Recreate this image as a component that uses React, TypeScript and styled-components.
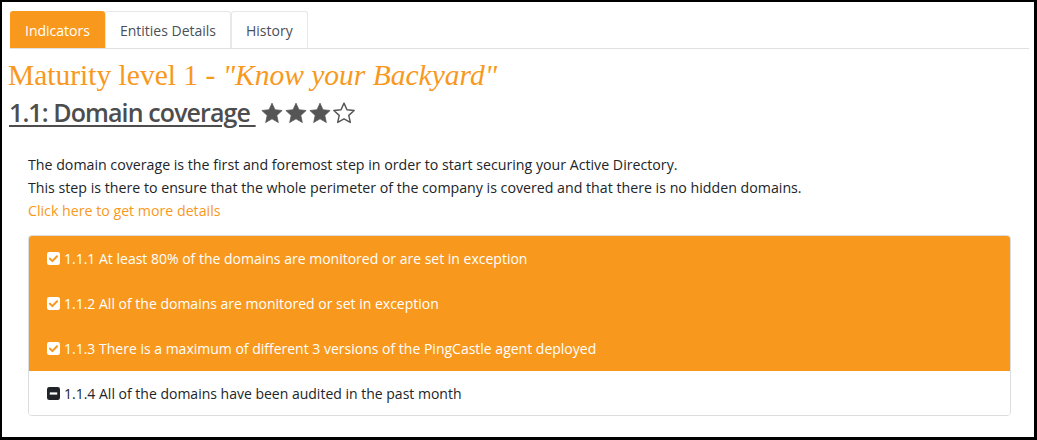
import React from "react";
import styled, { createGlobalStyle } from "styled-components";

const ORANGE = "#f8991d";

const Global = createGlobalStyle`
  html, body { margin: 0; padding: 0; background: #000; }
  body { width: 1037px; height: 440px; overflow: hidden; }
  * { box-sizing: border-box; }
`;

const Frame = styled.div`
  width: 1037px;
  height: 440px;
  border-style: solid;
  border-color: #000;
  border-width: 2px 3px 3px 2px;
  background: #fff;
  padding: 9px 5px 0 6px;
  font-family: "Open Sans", "Noto Sans", sans-serif;
  color: #212529;
`;

const Tabs = styled.div`
  display: flex;
  margin-left: 2px;
  border-bottom: 1px solid #e0e0e0;
  height: 38px;
`;

const Tab = styled.div<{ $active?: boolean }>`
  height: 37px;
  padding: 0 14px;
  display: flex;
  align-items: center;
  font-size: 14px;
  border: 1px solid ${(p) => (p.$active ? ORANGE : "#e8e8e8")};
  border-bottom: none;
  border-radius: 3px 3px 0 0;
  background: ${(p) => (p.$active ? ORANGE : "#fff")};
  color: ${(p) => (p.$active ? "#fff" : "#495057")};
`;

const Title = styled.h2`
  margin: 10px 0 0 0;
  font-family: "Liberation Serif", "DejaVu Serif", serif;
  font-weight: normal;
  font-size: 29.5px;
  line-height: 33px;
  color: ${ORANGE};
  em { font-style: italic; }
`;

const SubTitle = styled.h3`
  margin: 4px 0 0 1px;
  font-size: 25px;
  letter-spacing: -0.9px;
  font-weight: 600;
  line-height: 32px;
  color: #4d4d4d;
  display: flex;
  align-items: center;
  span.t {
    text-decoration: underline;
    text-underline-offset: 3px;
    text-decoration-thickness: 2px;
    white-space: pre;
  }
`;

const Stars = styled.span`
  display: inline-flex;
  margin-left: 4px;
  margin-top: 2px;
`;

const Body = styled.div`
  padding: 25px 20px 0 20px;
`;

const Para = styled.p`
  margin: 0;
  font-size: 14.2px;
  line-height: 23px;
  color: #212529;
`;

const Link = styled.a`
  display: block;
  font-size: 14.2px;
  line-height: 23px;
  color: ${ORANGE};
  text-decoration: none;
`;

const List = styled.div`
  margin-top: 13px;
  border: 1px solid #dcdcdc;
  border-radius: 4px;
  overflow: hidden;
  width: 983px;
`;

const Row = styled.div<{ $done?: boolean }>`
  height: ${(p) => (p.$done ? 45 : 44)}px;
  display: flex;
  align-items: center;
  padding-left: 18px;
  gap: 4px;
  font-size: 14px;
  background: ${(p) => (p.$done ? ORANGE : "#fff")};
  color: ${(p) => (p.$done ? "#fff" : "#212529")};
`;

const Star = ({ filled }: { filled: boolean }) => (
  <svg width="24" height="22" viewBox="0 0 24 23">
    <path
      d="M12 1.2l3.1 6.9 7.5.8-5.6 5.1 1.6 7.4L12 17.6l-6.6 3.8 1.6-7.4-5.6-5.1 7.5-.8z"
      fill={filled ? "#555" : "none"}
      stroke="#555"
      strokeWidth={filled ? 0.8 : 1.5}
      strokeLinejoin="round"
    />
  </svg>
);

const CheckIcon = () => (
  <svg width="13" height="13" viewBox="0 0 14 14">
    <rect x="0" y="0" width="14" height="14" rx="2.5" fill="#fff" />
    <path d="M3.2 7.2l2.6 2.6 5-5.2" fill="none" stroke={ORANGE} strokeWidth="2.2" strokeLinecap="round" strokeLinejoin="round" />
  </svg>
);

const MinusIcon = () => (
  <svg width="13" height="13" viewBox="0 0 14 14">
    <rect x="0" y="0" width="14" height="14" rx="2.5" fill="#212529" />
    <rect x="3" y="5.8" width="8" height="2.4" fill="#fff" />
  </svg>
);

const items = [
  { done: true, text: "1.1.1 At least 80% of the domains are monitored or are set in exception" },
  { done: true, text: "1.1.2 All of the domains are monitored or set in exception" },
  { done: true, text: "1.1.3 There is a maximum of different 3 versions of the PingCastle agent deployed" },
  { done: false, text: "1.1.4 All of the domains have been audited in the past month" },
];

export default function App() {
  return (
    <>
      <Global />
      <Frame>
        <Tabs>
          <Tab $active>Indicators</Tab>
          <Tab>Entities Details</Tab>
          <Tab>History</Tab>
        </Tabs>
        <Title>
          Maturity level 1 - <em>"Know your Backyard"</em>
        </Title>
        <SubTitle>
          <span className="t">1.1: Domain coverage </span>
          <Stars>
            <Star filled />
            <Star filled />
            <Star filled />
            <Star filled={false} />
          </Stars>
        </SubTitle>
        <Body>
          <Para>The domain coverage is the first and foremost step in order to start securing your Active Directory.</Para>
          <Para>This step is there to ensure that the whole perimeter of the company is covered and that there is no hidden domains.</Para>
          <Link href="#">Click here to get more details</Link>
          <List>
            {items.map((it) => (
              <Row key={it.text} $done={it.done}>
                {it.done ? <CheckIcon /> : <MinusIcon />}
                <span>{it.text}</span>
              </Row>
            ))}
          </List>
        </Body>
      </Frame>
    </>
  );
}
